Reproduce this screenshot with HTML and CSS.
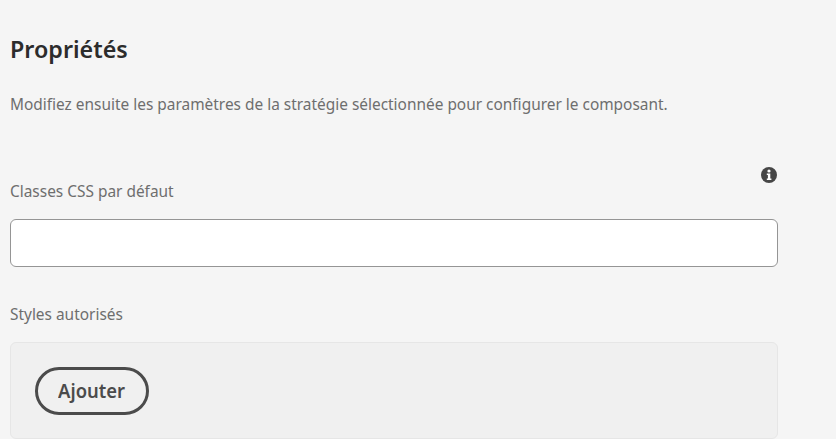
FILE: index.html
```html
<!DOCTYPE html>
<html lang="fr">
<head>
<meta charset="utf-8">
<title>Propriétés</title>
<link rel="stylesheet" href="styles.css">
</head>
<body>
<main class="panel">
  <h1 class="title"><span>Propriétés</span></h1>
  <p class="intro"><span>Modifiez ensuite les paramètres de la stratégie sélectionnée pour configurer le composant.</span></p>
  <div class="field">
    <div class="field-head">
      <label class="label label-classes" for="classes">Classes CSS par défaut</label>
      <svg class="info" viewBox="0 0 16 16" aria-hidden="true">
        <circle cx="8" cy="8" r="8" fill="#464646"/>
        <circle cx="8" cy="4" r="1.6" fill="#fff"/>
        <path d="M5.8 6.5h3.5v4.9h1.1v1.5H5.8v-1.5h1.1V8H5.8z" fill="#fff"/>
      </svg>
    </div>
    <input class="input" id="classes" type="text">
  </div>
  <div class="label label-styles">Styles autorisés</div>
  <section class="well"><button class="add" type="button"><span>Ajouter</span></button></section>
</main>
</body>
</html>
```
FILE: styles.css
```css
* { box-sizing: border-box; }
body { margin: 0; height: 439px; overflow: hidden; background: #f5f5f5; color: #6e6e6e; font-family: "Noto Sans", sans-serif; }
.panel { width: 768px; margin-left: 10px; padding-top: 33px; }
.title { margin: 0; height: 32px; line-height: 32px; font-size: 24px; font-weight: 600; color: #2c2c2c; white-space: nowrap; }
.intro { margin: 27px 0 0; height: 24px; line-height: 24px; font-size: 17px; white-space: nowrap; }
.title span, .intro span, .label, .add span { display: inline-block; transform-origin: 0 50%; }
.title span { transform: scaleX(.97); }
.intro span, .label { transform: scaleX(.907); }
.field { margin-top: 50px; }
.field-head { display: flex; justify-content: space-between; align-items: flex-start; height: 53px; }
.label { line-height: 24px; font-size: 17px; white-space: nowrap; }
.label-classes { margin-top: 13px; }
.info { width: 16px; height: 16px; margin: .5px 1px 0 0; }
.input { display: block; width: 100%; height: 48px; padding: 0 16px; border: 1px solid #959595; border-radius: 6px; background: #fff; font: inherit; }
.label-styles { display: block; margin-top: 35px; height: 24px; }
.well { margin-top: 16px; height: 97px; padding: 24px; border: 1px solid #e6e6e6; border-radius: 6px; background: #f0f0f0; }
.add { display: flex; align-items: center; justify-content: center; width: 114px; height: 48px; padding: 0 0 1px; border: 3px solid #4b4b4b; border-radius: 24px; background: transparent; color: #4b4b4b; font-family: inherit; font-size: 19px; font-weight: 600; }
.add span { transform: scaleX(.97); transform-origin: 50% 50%; }
```
